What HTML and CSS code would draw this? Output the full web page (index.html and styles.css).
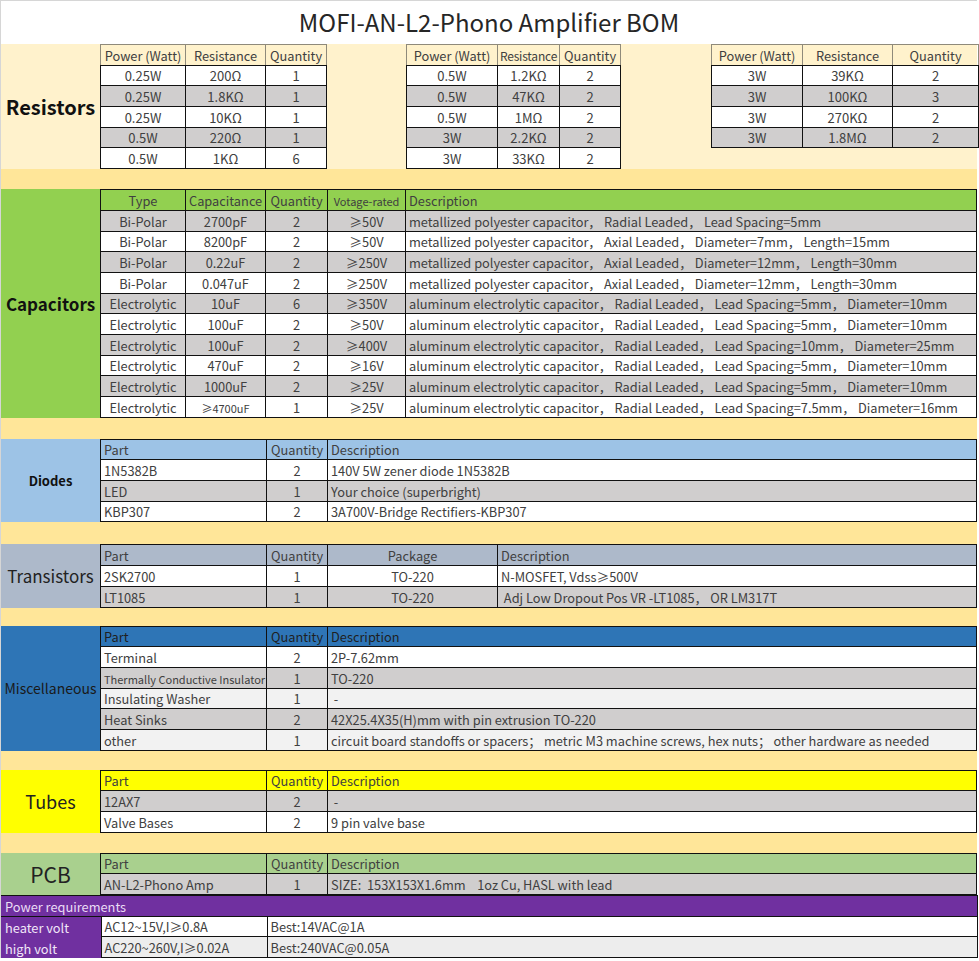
FILE: index.html
```html
<!DOCTYPE html>
<html>
<head>
<meta charset="utf-8">
<title>MOFI-AN-L2-Phono Amplifier BOM</title>
<link rel="stylesheet" href="styles.css">
</head>
<body>
<div class="sheet">
  <div class="title">MOFI-AN-L2-Phono Amplifier BOM</div>

  <div class="sec res">
    <div class="label lbl-res">Resistors</div>
    <table class="t-r1">
      <colgroup><col style="width:85px"><col style="width:80px"><col style="width:61px"></colgroup>
      <tr class="hd"><td>Power (Watt)</td><td>Resistance</td><td>Quantity</td></tr>
      <tr class="w"><td>0.25W</td><td>200Ω</td><td>1</td></tr>
      <tr class="g"><td>0.25W</td><td>1.8KΩ</td><td>1</td></tr>
      <tr class="w"><td>0.25W</td><td>10KΩ</td><td>1</td></tr>
      <tr class="g"><td>0.5W</td><td>220Ω</td><td>1</td></tr>
      <tr class="w"><td>0.5W</td><td>1KΩ</td><td>6</td></tr>
    </table>
    <table class="t-r2">
      <colgroup><col style="width:91px"><col style="width:62px"><col style="width:61px"></colgroup>
      <tr class="hd"><td>Power (Watt)</td><td class="tight">Resistance</td><td>Quantity</td></tr>
      <tr class="w"><td>0.5W</td><td>1.2KΩ</td><td>2</td></tr>
      <tr class="g"><td>0.5W</td><td>47KΩ</td><td>2</td></tr>
      <tr class="w"><td>0.5W</td><td>1MΩ</td><td>2</td></tr>
      <tr class="g"><td>3W</td><td>2.2KΩ</td><td>2</td></tr>
      <tr class="w"><td>3W</td><td>33KΩ</td><td>2</td></tr>
    </table>
    <table class="t-r3">
      <colgroup><col style="width:91px"><col style="width:90px"><col style="width:86px"></colgroup>
      <tr class="hd"><td>Power (Watt)</td><td>Resistance</td><td>Quantity</td></tr>
      <tr class="w"><td>3W</td><td>39KΩ</td><td>2</td></tr>
      <tr class="g"><td>3W</td><td>100KΩ</td><td>3</td></tr>
      <tr class="w"><td>3W</td><td>270KΩ</td><td>2</td></tr>
      <tr class="g"><td>3W</td><td>1.8MΩ</td><td>2</td></tr>
    </table>
  </div>

  <div class="gap gap1"></div>

  <div class="sec caps">
    <div class="label lbl-caps">Capacitors</div>
    <table class="t-caps">
      <colgroup><col style="width:85px"><col style="width:80px"><col style="width:62px"><col style="width:78px"><col style="width:571px"></colgroup>
      <tr class="hd"><td class="c">Type</td><td class="c">Capacitance</td><td class="c">Quantity</td><td class="c small">Votage-rated</td><td>Description</td></tr>
      <tr class="g"><td class="c">Bi-Polar</td><td class="c">2700pF</td><td class="c">2</td><td class="c">≥50V</td><td>metallized polyester capacitor，&nbsp;Radial Leaded，&nbsp;Lead Spacing=5mm</td></tr>
      <tr class="w"><td class="c">Bi-Polar</td><td class="c">8200pF</td><td class="c">2</td><td class="c">≥50V</td><td>metallized polyester capacitor，&nbsp;Axial Leaded，&nbsp;Diameter=7mm，&nbsp;Length=15mm</td></tr>
      <tr class="g"><td class="c">Bi-Polar</td><td class="c">0.22uF</td><td class="c">2</td><td class="c">≥250V</td><td>metallized polyester capacitor，&nbsp;Axial Leaded，&nbsp;Diameter=12mm，&nbsp;Length=30mm</td></tr>
      <tr class="w"><td class="c">Bi-Polar</td><td class="c">0.047uF</td><td class="c">2</td><td class="c">≥250V</td><td>metallized polyester capacitor，&nbsp;Axial Leaded，&nbsp;Diameter=12mm，&nbsp;Length=30mm</td></tr>
      <tr class="g"><td class="c">Electrolytic</td><td class="c">10uF</td><td class="c">6</td><td class="c">≥350V</td><td>aluminum electrolytic capacitor，&nbsp;Radial Leaded，&nbsp;Lead Spacing=5mm，&nbsp;Diameter=10mm</td></tr>
      <tr class="w"><td class="c">Electrolytic</td><td class="c">100uF</td><td class="c">2</td><td class="c">≥50V</td><td>aluminum electrolytic capacitor，&nbsp;Radial Leaded，&nbsp;Lead Spacing=5mm，&nbsp;Diameter=10mm</td></tr>
      <tr class="g"><td class="c">Electrolytic</td><td class="c">100uF</td><td class="c">2</td><td class="c">≥400V</td><td>aluminum electrolytic capacitor，&nbsp;Radial Leaded，&nbsp;Lead Spacing=10mm，&nbsp;Diameter=25mm</td></tr>
      <tr class="w"><td class="c">Electrolytic</td><td class="c">470uF</td><td class="c">2</td><td class="c">≥16V</td><td>aluminum electrolytic capacitor，&nbsp;Radial Leaded，&nbsp;Lead Spacing=5mm，&nbsp;Diameter=10mm</td></tr>
      <tr class="g"><td class="c">Electrolytic</td><td class="c">1000uF</td><td class="c">2</td><td class="c">≥25V</td><td>aluminum electrolytic capacitor，&nbsp;Radial Leaded，&nbsp;Lead Spacing=5mm，&nbsp;Diameter=10mm</td></tr>
      <tr class="w"><td class="c">Electrolytic</td><td class="c small">≥4700uF</td><td class="c">1</td><td class="c">≥25V</td><td>aluminum electrolytic capacitor，&nbsp;Radial Leaded，&nbsp;Lead Spacing=7.5mm，&nbsp;Diameter=16mm</td></tr>
    </table>
  </div>

  <div class="gap gap2"></div>

  <div class="sec diodes">
    <div class="label lbl-diodes">Diodes</div>
    <table class="t-std">
      <colgroup><col style="width:166px"><col style="width:61px"><col style="width:649px"></colgroup>
      <tr class="hd"><td>Part</td><td class="c">Quantity</td><td>Description</td></tr>
      <tr class="w"><td>1N5382B</td><td class="c">2</td><td>140V 5W zener diode 1N5382B</td></tr>
      <tr class="g"><td>LED</td><td class="c">1</td><td>Your choice (superbright)</td></tr>
      <tr class="w"><td>KBP307</td><td class="c">2</td><td>3A700V-Bridge Rectifiers-KBP307</td></tr>
    </table>
  </div>

  <div class="gap gap3"></div>

  <div class="sec trans">
    <div class="label lbl-trans">Transistors</div>
    <table class="t-std">
      <colgroup><col style="width:166px"><col style="width:61px"><col style="width:170px"><col style="width:479px"></colgroup>
      <tr class="hd"><td>Part</td><td class="c">Quantity</td><td class="c">Package</td><td>Description</td></tr>
      <tr class="w"><td>2SK2700</td><td class="c">1</td><td class="c">TO-220</td><td>N-MOSFET, Vdss≥500V</td></tr>
      <tr class="g"><td>LT1085</td><td class="c">1</td><td class="c">TO-220</td><td>&nbsp;Adj Low Dropout Pos VR -LT1085，&nbsp;OR LM317T</td></tr>
    </table>
  </div>

  <div class="gap gap4"></div>

  <div class="sec misc">
    <div class="label lbl-misc">Miscellaneous</div>
    <table class="t-std">
      <colgroup><col style="width:166px"><col style="width:61px"><col style="width:649px"></colgroup>
      <tr class="hd"><td>Part</td><td class="c">Quantity</td><td>Description</td></tr>
      <tr class="w"><td>Terminal</td><td class="c">2</td><td>2P-7.62mm</td></tr>
      <tr class="g"><td class="small">Thermally Conductive Insulator</td><td class="c">1</td><td>TO-220</td></tr>
      <tr class="l"><td>Insulating Washer</td><td class="c">1</td><td>&nbsp;-</td></tr>
      <tr class="g"><td>Heat Sinks</td><td class="c">2</td><td>42X25.4X35(H)mm with pin extrusion TO-220</td></tr>
      <tr class="l"><td>other</td><td class="c">1</td><td>circuit board standoffs or spacers；&nbsp;metric M3 machine screws, hex nuts；&nbsp;other hardware as needed</td></tr>
    </table>
  </div>

  <div class="gap gap5"></div>

  <div class="sec tubes">
    <div class="label lbl-tubes">Tubes</div>
    <table class="t-std">
      <colgroup><col style="width:166px"><col style="width:61px"><col style="width:649px"></colgroup>
      <tr class="hd"><td>Part</td><td class="c">Quantity</td><td>Description</td></tr>
      <tr class="g"><td>12AX7</td><td class="c">2</td><td>&nbsp;-</td></tr>
      <tr class="w"><td>Valve Bases</td><td class="c">2</td><td>9 pin valve base</td></tr>
    </table>
  </div>

  <div class="gap gap6"></div>

  <div class="sec pcb">
    <div class="label lbl-pcb">PCB</div>
    <table class="t-std">
      <colgroup><col style="width:166px"><col style="width:61px"><col style="width:649px"></colgroup>
      <tr class="hd"><td>Part</td><td class="c">Quantity</td><td>Description</td></tr>
      <tr class="g"><td>AN-L2-Phono Amp</td><td class="c">1</td><td>SIZE:&nbsp; 153X153X1.6mm&nbsp; &nbsp; 1oz Cu, HASL with lead</td></tr>
    </table>
  </div>

  <table class="t-power">
    <colgroup><col style="width:100px"><col style="width:166px"><col style="width:710px"></colgroup>
    <tr class="phd"><td colspan="3">Power requirements</td></tr>
    <tr class="w"><td class="plbl">heater volt</td><td>AC12~15V,I≥0.8A</td><td>Best:14VAC@1A</td></tr>
    <tr class="l2"><td class="plbl">high volt</td><td>AC220~260V,I≥0.02A</td><td>Best:240VAC@0.05A</td></tr>
  </table>
</div>
</body>
</html>
```

FILE: styles.css
```css
* { box-sizing: border-box; }

body {
  margin: 0;
  background: #ffffff;
  font-family: "Noto Sans CJK SC", "Noto Sans", sans-serif;
  color: #404040;
}

.sheet {
  width: 977px;
  border-left: 1px solid #d6d6d6;
}

.title {
  height: 44px;
  border-top: 1px solid #d6d6d6;
  text-align: center;
  font-size: 24px;
  line-height: 42px;
  color: #262626;
}

.sec {
  display: flex;
  align-items: stretch;
}

.label {
  width: 99px;
  flex: none;
  display: flex;
  align-items: center;
  justify-content: center;
  color: #111;
}

.gap {
  height: 20px;
  background: #ffe699;
}
.gap1 { height: 20px; }
.gap2 { height: 21px; }
.gap3 { height: 22px; }
.gap4 { height: 18px; }
.gap5 { height: 19px; }
.gap6 { height: 20px; }

table {
  border-collapse: collapse;
  table-layout: fixed;
  flex: none;
}

td {
  border: 1px solid #111;
  padding: 0 3px;
  font-size: 12.8px;
  line-height: 18px;
  white-space: nowrap;
  overflow: hidden;
  vertical-align: bottom;
}

tr { height: 20.7px; }

td.c { text-align: center; }
td.small { font-size: 11px; }

tr.w td { background: #ffffff; }
tr.g td { background: #d0cece; }
tr.l td { background: #f2f2f2; }
tr.l2 td { background: #ededed; }

/* Resistors */
.res { background: #fff2cc; align-items: flex-start; }
.lbl-res { font-weight: bold; font-size: 20px; align-self: stretch; }
.res td { text-align: center; padding: 0 1px; font-size: 13px; }
.res tr.hd td { border-color: #8f8a7a; border-bottom-color: #111; font-size: 12.8px; }
.res tr.hd td.tight { font-size: 12px; letter-spacing: -0.2px; }
.t-r1 { width: 226px; }
.t-r2 { width: 214px; margin-left: 79px; }
.t-r3 { width: 267px; margin-left: 90px; }

/* Capacitors */
.t-caps, .t-std { width: 876px; }
.caps, .caps tr.hd td { background: #92d050; }
.lbl-caps { font-weight: bold; font-size: 17px; }

/* Diodes */
.diodes, .diodes tr.hd td { background: #9dc3e6; }
.lbl-diodes { font-weight: bold; font-size: 13px; }

/* Transistors */
.trans, .trans tr.hd td { background: #adb9ca; }
.lbl-trans { font-size: 17px; color: #222; }

/* Misc */
.misc, .misc tr.hd td { background: #2e75b6; }
.misc tr.hd td { color: #1f1f1f; }
.lbl-misc { font-size: 14px; color: #1a1a1a; }

/* Tubes */
.tubes, .tubes tr.hd td { background: #ffff00; }
.lbl-tubes { font-size: 18px; color: #222; }

/* PCB */
.pcb, .pcb tr.hd td { background: #a9d08e; }
.lbl-pcb { font-size: 21px; color: #222; }

/* Power */
.t-power { width: 976px; }
.t-power tr.phd td {
  background: #7030a0;
  color: #eadcf5;
  border-left: none;
  padding-left: 4px;
}
.t-power td.plbl {
  background: #7030a0;
  color: #f0e6f8;
  border-left: none;
  border-top: none;
  border-bottom: none;
  padding-left: 4px;
}
```
